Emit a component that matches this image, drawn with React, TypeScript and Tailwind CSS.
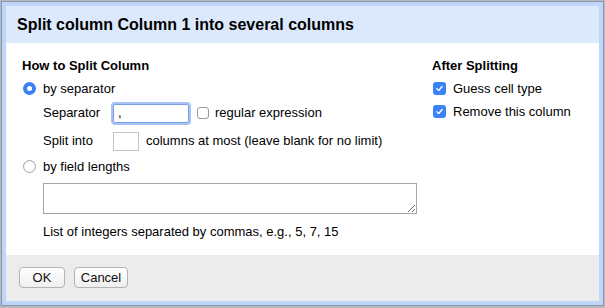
import React from "react";

const font = { fontFamily: '"Liberation Sans", Arial, Helvetica, sans-serif' };

function Radio({ checked }: { checked?: boolean }) {
  return checked ? (
    <span className="flex h-[13px] w-[13px] items-center justify-center rounded-full bg-[#3b82f6]">
      <span className="block h-[5px] w-[5px] rounded-full bg-white" />
    </span>
  ) : (
    <span className="block h-[13px] w-[13px] rounded-full border border-[#a3a3a3] bg-white shadow-[inset_0_1px_1px_rgba(0,0,0,0.06)]" />
  );
}

function Check({ checked }: { checked?: boolean }) {
  return checked ? (
    <span className="flex h-[13px] w-[13px] items-center justify-center rounded-[3px] bg-[#3b82f6]">
      <svg viewBox="0 0 12 12" className="h-[9px] w-[9px]" fill="none" stroke="white" strokeWidth="1.8" strokeLinecap="round" strokeLinejoin="round">
        <path d="M2.5 6.3 L5 8.6 L9.5 3.4" />
      </svg>
    </span>
  ) : (
    <span className="block h-[12px] w-[12px] rounded-[3px] border border-[#9a9a9a] bg-white" />
  );
}

function Button({ label, w }: { label: string; w: string }) {
  return (
    <button
      className={`h-[21px] ${w} rounded-[4px] border border-[#b3b3b3] bg-gradient-to-b from-white to-[#efefef] text-[13px] leading-none text-[#111]`}
    >
      {label}
    </button>
  );
}

export default function App() {
  return (
    <div className="h-[308px] w-[605px] overflow-hidden bg-[#b9b9b9] pl-[1px] pt-[1px]" style={font}>
      <div className="w-[603px] border border-[#8596b0]">
        <div className="border-4 border-[#c0d6f8] bg-white">
          {/* Header */}
          <div className="flex h-[37px] items-center bg-[#dce9fc] pl-[11px] text-[16px] font-bold text-black">
            Split column Column 1 into several columns
          </div>

          {/* Body */}
          <div className="flex h-[212px] pl-[16px] pt-[15px] text-[13px] text-black">
            <div className="w-[410px]">
              <div className="h-[16px] font-bold leading-[16px]">How to Split Column</div>

              <div className="mt-[6px] flex h-[17px] items-center">
                <span className="ml-[1px]">
                  <Radio checked />
                </span>
                <span className="ml-[7px]">by separator</span>
              </div>

              <div className="mt-[4px] flex h-[24px] items-center pl-[21px]">
                <span className="w-[70px]">Separator</span>
                <input
                  readOnly
                  value=","
                  className="h-[19px] w-[76px] rounded-[2px] border border-[#7b9de3] px-[4px] text-[13px] shadow-[0_0_0_2px_#a8c4f5] outline-none"
                />
                <span className="ml-[8px]">
                  <Check />
                </span>
                <span className="ml-[6px]">regular expression</span>
              </div>

              <div className="mt-[6px] flex h-[20px] items-center pl-[21px]">
                <span className="w-[70px]">Split into</span>
                <input readOnly className="h-[19px] w-[26px] border border-[#c4c4c4] outline-none" />
                <span className="ml-[7px]">columns at most (leave blank for no limit)</span>
              </div>

              <div className="mt-[7px] flex h-[17px] items-center">
                <span className="ml-[1px]">
                  <Radio />
                </span>
                <span className="ml-[7px]">by field lengths</span>
              </div>

              <div className="mt-[8px] pl-[21px]">
                <textarea
                  readOnly
                  className="block h-[31px] w-[374px] border border-[#a6a6a6] outline-none"
                />
              </div>

              <div className="mt-[10px] h-[16px] pl-[21px] leading-[16px]">
                List of integers separated by commas, e.g., 5, 7, 15
              </div>
            </div>

            <div>
              <div className="h-[16px] font-bold leading-[16px]">After Splitting</div>
              <div className="mt-[6px] flex h-[17px] items-center">
                <span className="ml-[1px]">
                  <Check checked />
                </span>
                <span className="ml-[7px]">Guess cell type</span>
              </div>
              <div className="mt-[6px] flex h-[17px] items-center">
                <span className="ml-[1px]">
                  <Check checked />
                </span>
                <span className="ml-[7px]">Remove this column</span>
              </div>
            </div>
          </div>

          {/* Footer */}
          <div className="flex h-[46px] gap-[9px] bg-[#ececec] pl-[13px] pt-[12px]">
            <Button label="OK" w="w-[46px]" />
            <Button label="Cancel" w="w-[54px]" />
          </div>
        </div>
      </div>
    </div>
  );
}
